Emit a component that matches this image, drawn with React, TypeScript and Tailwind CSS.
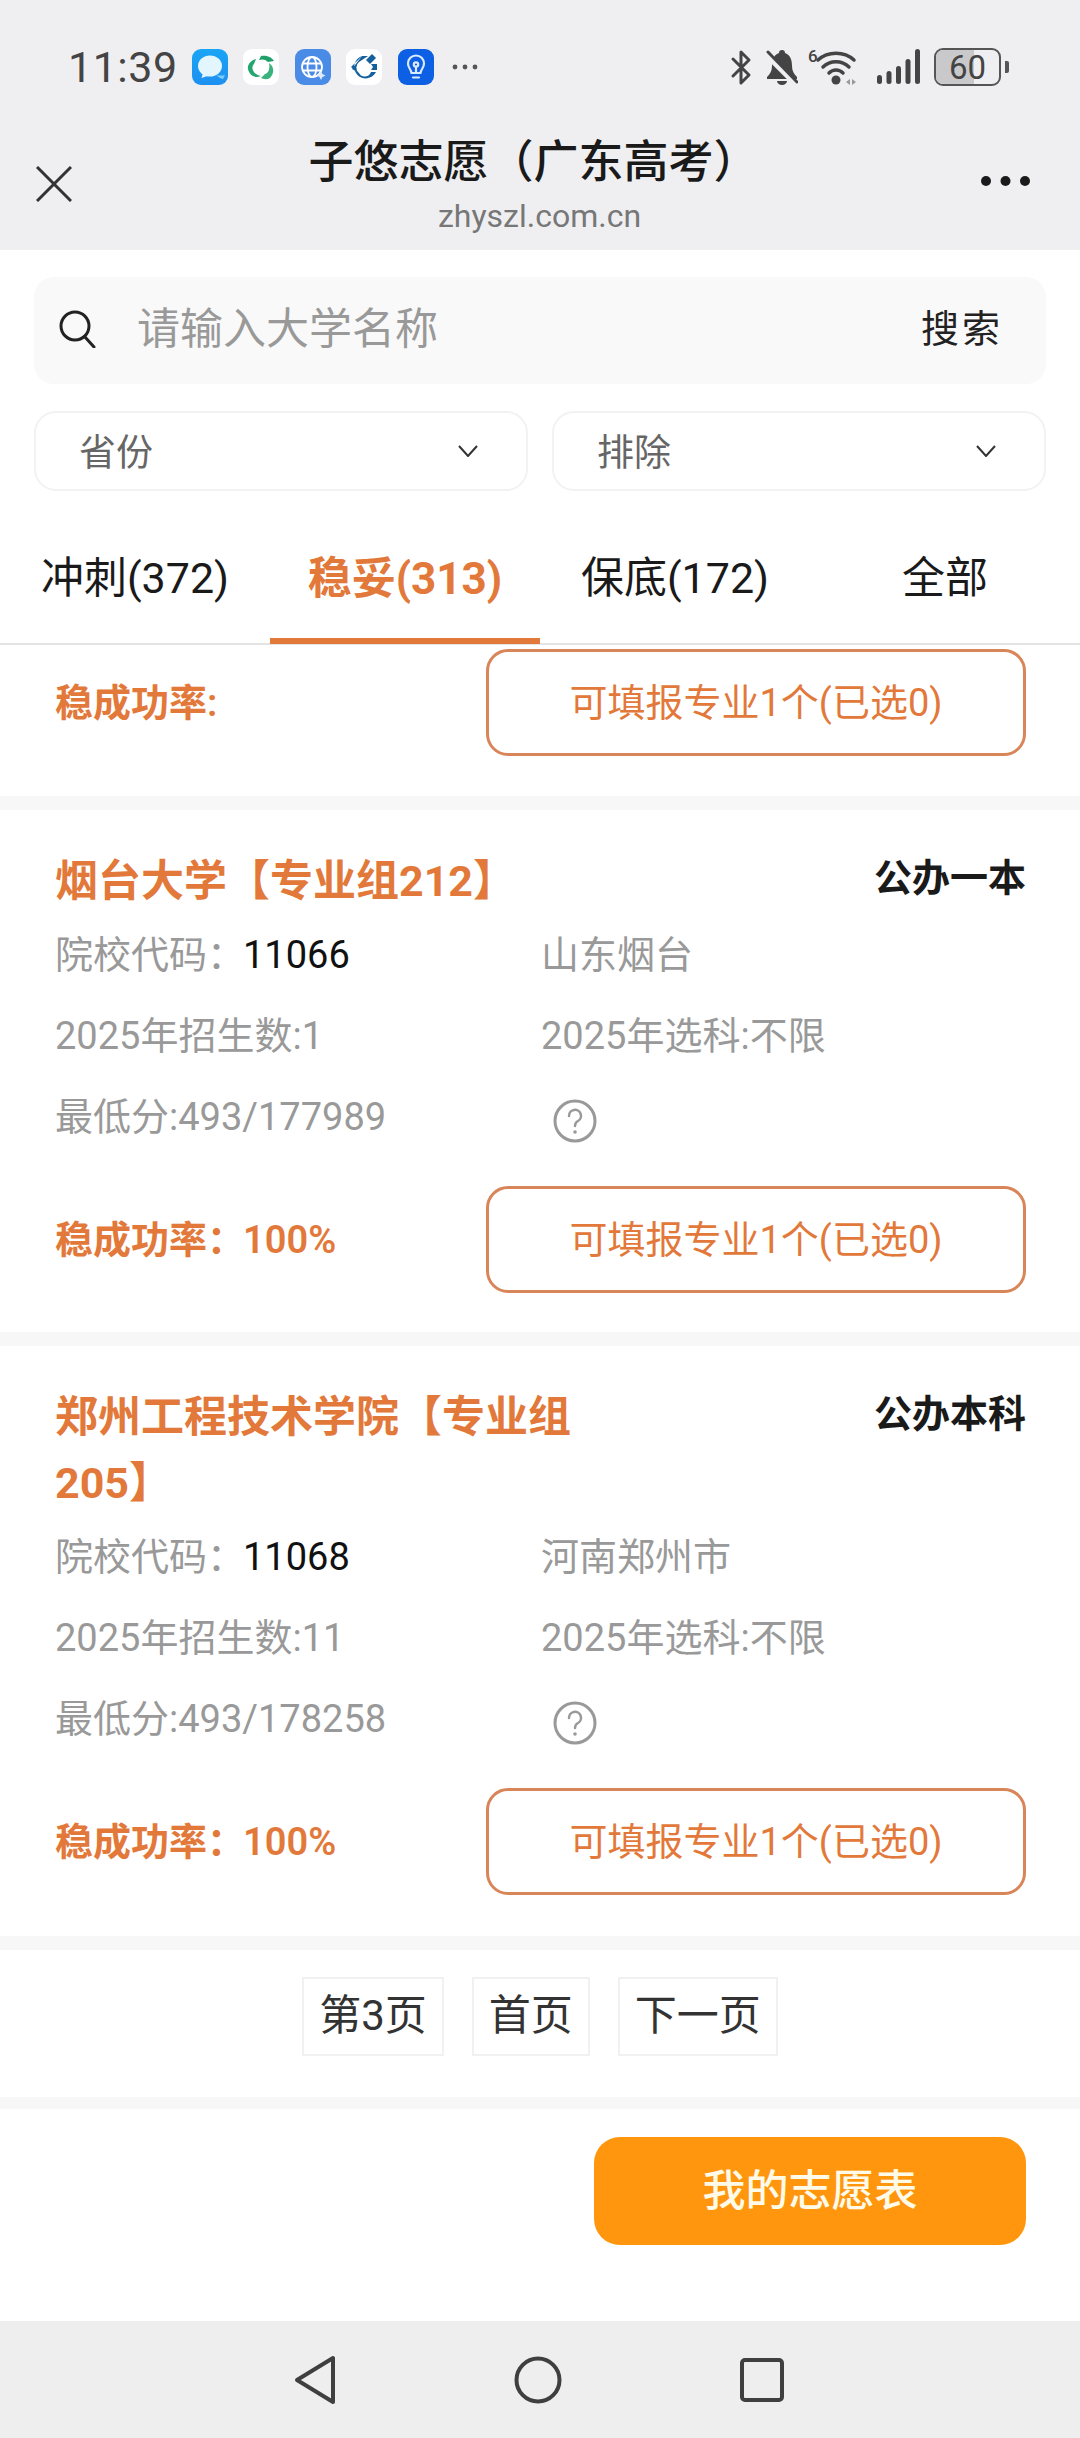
import React from "react";

const ORANGE = "text-[#e2793a]";

function AppIcons() {
  return (
    <div className="flex items-center ml-[14px]">
      <svg width="36" height="36" viewBox="0 0 36 36" className="mr-[15px]">
        <defs>
          <linearGradient id="m" x1="0" y1="0" x2="0" y2="1">
            <stop offset="0" stopColor="#19a5f5" />
            <stop offset="1" stopColor="#1e90f0" />
          </linearGradient>
        </defs>
        <rect width="36" height="36" rx="9" fill="url(#m)" />
        <ellipse cx="18" cy="17" rx="12" ry="10.5" fill="#e3f5fd" />
        <path d="M11 24 L9.5 29 L17 26.5 Z" fill="#e3f5fd" />
        <path d="M24 26 Q29 27 33 26 L31 30 Q27 29 24 26Z" fill="#7fcdf7" />
      </svg>
      <svg width="36" height="36" viewBox="0 0 36 36" className="mr-[16px]">
        <rect width="36" height="36" rx="9" fill="#ffffff" />
        <path d="M18 7 C25 6 29 9 31 12 L25 13 C22 10 19 10 16 11 Z" fill="#1fa06b" />
        <path d="M26 14 C32 18 31 25 27 29 C24 31 20 30 18 29 L22 25 C26 24 27 19 26 14Z" fill="#39b27c" />
        <path d="M18 27 C11 30 6 25 5 20 C4 16 8 11 13 10 L11 15 C7 19 11 26 18 27Z" fill="#25a56f" />
      </svg>
      <svg width="36" height="36" viewBox="0 0 36 36" className="mr-[15px]">
        <rect width="36" height="36" rx="9" fill="#4a8be6" />
        <g fill="none" stroke="#ffffff" strokeWidth="1.8">
          <circle cx="17" cy="18" r="10" />
          <ellipse cx="17" cy="18" rx="4.5" ry="10" />
          <path d="M7.5 14.5h19M7.5 21.5h19" />
        </g>
        <path d="M26 22l1.5 3 3 1.5-3 1.5-1.5 3-1.5-3-3-1.5 3-1.5z" fill="#dbe9fb" />
      </svg>
      <svg width="36" height="36" viewBox="0 0 36 36" className="mr-[16px]">
        <rect width="36" height="36" rx="9" fill="#ffffff" />
        <path d="M16 7 A11.500 11.500 0 1 0 30 23 L25 23 A6.500 6.500 0 0 1 13 24 L5 18 Z" fill="#14609c" />
        <path d="M16 7 L22 7 L13 13 A7 7 0 0 0 13 24 L6 20 Z" fill="#14609c" />
        <path d="M18 12 L24 18 L18 24 L12 18 Z" fill="#ffffff" />
        <path d="M20 11 L26 5 L30 9 L24 15 Z" fill="#14609c" />
        <path d="M25 15 L31 15 L31 21 L25 21 L27 18 Z" fill="#14609c" />
      </svg>
      <svg width="36" height="36" viewBox="0 0 36 36" className="mr-[18px]">
        <rect width="36" height="36" rx="9" fill="#0d5fe3" />
        <g fill="none" stroke="#dbe9ff" strokeWidth="2.2" strokeLinecap="round" strokeLinejoin="round">
          <path d="M13.5 24 C13 20 10 19 10 14.5 A8 8 0 0 1 26 14.5 C26 19 23 20 22.5 24 Z" />
          <path d="M15 28.5h6" />
          <path d="M18 24v-6" />
          <circle cx="18" cy="15.5" r="2.2" />
        </g>
      </svg>
      <svg width="26" height="6" viewBox="0 0 26 6">
        <circle cx="3" cy="3" r="2.4" fill="#555" />
        <circle cx="13" cy="3" r="2.4" fill="#555" />
        <circle cx="23" cy="3" r="2.4" fill="#555" />
      </svg>
    </div>
  );
}

function StatusRight() {
  return (
    <div className="flex items-center ml-auto">
      <svg width="24" height="37" viewBox="0 0 24 37" fill="none" stroke="#444" strokeWidth="3" strokeLinejoin="round" strokeLinecap="round" className="mr-[12px]">
        <path d="M3 10 L19 26 L11 34 L11 3 L19 11 L3 27" />
      </svg>
      <svg width="32" height="36" viewBox="0 0 32 36" className="mr-[10px]">
        <path d="M16 1a3 3 0 0 1 3 3 C25 6 26 12 26 17 C26 22 28 25 31 28 L31 30 L1 30 L1 28 C4 25 6 22 6 17 C6 12 7 6 13 4 a3 3 0 0 1 3-3Z" fill="#444" />
        <path d="M11 32 a5 4 0 0 0 10 0Z" fill="#444" />
        <path d="M1 6 L30 35" stroke="#efeff1" strokeWidth="6" />
        <path d="M2 3 L31 33" stroke="#444" strokeWidth="3" strokeLinecap="round" />
      </svg>
      <div className="relative w-[50px] h-[37px] mr-[19px]">
        <span className="absolute left-0 top-[-3px] text-[17px] leading-[20px] font-medium text-[#444]">6</span>
        <svg width="50" height="37" viewBox="0 0 50 37" fill="none" stroke="#444" strokeLinecap="round" className="absolute left-0 top-0">
          <path d="M10 11 C20 2 36 2 46 11" strokeWidth="3.5" />
          <path d="M15 18 C22 11 34 11 41 18" strokeWidth="3.5" />
          <path d="M21 24 C25 20 31 20 35 24" strokeWidth="3.5" />
          <circle cx="28" cy="31" r="4.5" fill="#444" stroke="none" />
          <path d="M38 33 l4-3 v6z M48 33 l-4-3 v6z" fill="#999" stroke="none" />
        </svg>
      </div>
      <svg width="43" height="36" viewBox="0 0 43 36" fill="#444" className="mr-[14px]">
        <rect x="0" y="26" width="5" height="9" rx="2.5" />
        <rect x="9.5" y="22" width="5" height="13" rx="2.5" />
        <rect x="19" y="17" width="5" height="18" rx="2.5" />
        <rect x="28.500" y="10" width="5" height="25" rx="2.5" />
        <rect x="38" y="0" width="5" height="35" rx="2.5" />
      </svg>
      <div className="relative w-[67px] h-[38px] rounded-[9px] border-[2.5px] border-[#555] overflow-hidden flex items-center justify-center">
        <div className="absolute left-0 top-0 bottom-0 w-[60%] bg-[#c9c9cb]" />
        <span className="relative text-[33px] leading-none text-[#444]">60</span>
      </div>
      <div className="w-[4px] h-[12px] rounded-r-[2px] bg-[#555] ml-[4px]" />
    </div>
  );
}

function Header() {
  return (
    <div className="h-[250px] bg-[#efeff1] shrink-0">
      <div className="flex items-center h-[38px] mt-[48px] pl-[68px] pr-[71px]">
        <span className="text-[43px] leading-none text-[#444] font-normal tracking-[0.5px]">11:39</span>
        <AppIcons />
        <StatusRight />
      </div>
      <div className="flex items-start mt-[55px] pl-[36px] pr-[50px]">
        <svg width="36" height="36" viewBox="0 0 36 36" fill="none" stroke="#333" strokeWidth="3" className="mt-[25px] shrink-0">
          <path d="M1 1 L35 35 M35 1 L1 35" />
        </svg>
        <div className="flex-1 flex flex-col items-center ml-[8px]">
          <div className="text-[45px] leading-[44px] text-[#1a1a1a] font-medium whitespace-nowrap ml-[6px]">子悠志愿（广东高考）</div>
          <div className="text-[32px] leading-[36px] text-[#777] mt-[13px] ml-[18px]">zhyszl.com.cn</div>
        </div>
        <svg width="49" height="10" viewBox="0 0 49 10" className="mt-[35px] shrink-0" fill="#1a1a1a">
          <circle cx="5" cy="5" r="5" />
          <circle cx="24.500" cy="5" r="5" />
          <circle cx="44" cy="5" r="5" />
        </svg>
      </div>
    </div>
  );
}

function Search() {
  return (
    <div className="mt-[27px] mx-[34px] h-[107px] rounded-[20px] bg-[#f9f9f9] flex items-center pl-[24px] pr-[43px] pb-[3px]">
      <svg width="38" height="38" viewBox="0 0 38 38" fill="none" stroke="#222" strokeWidth="3" strokeLinecap="round">
        <circle cx="17" cy="16" r="14" />
        <path d="M27 27 L36 37" />
      </svg>
      <span className="ml-[41px] text-[43px] leading-none text-[#999]">请输入大学名称</span>
      <span className="ml-auto text-[38px] leading-none text-[#222] tracking-[3px]">搜索</span>
    </div>
  );
}

function Select({ label }: { label: string }) {
  return (
    <div className="flex-1 h-[80px] rounded-[22px] border-2 border-[#f2f2f4] bg-white flex items-center pl-[43px] pr-[48px]">
      <span className="text-[37px] leading-none text-[#666] pt-[5px]">{label}</span>
      <svg width="20" height="12" viewBox="0 0 20 12" fill="none" stroke="#333" strokeWidth="2" className="ml-auto">
        <path d="M1 1 L10 11 L19 1" />
      </svg>
    </div>
  );
}

function Tabs() {
  const tabs = ["冲刺(372)", "稳妥(313)", "保底(172)", "全部"];
  return (
    <div className="grid grid-cols-4 h-[154px] border-b-2 border-[#e4e4e6]">
      {tabs.map((t, i) =>
        i === 1 ? (
          <div key={t} className="flex items-center justify-center pt-[28px] h-[153px] border-b-[6px] border-[#e2793a] text-[44px] font-bold text-[#e2793a]">
            {t}
          </div>
        ) : (
          <div key={t} className="flex items-center justify-center pt-[22px] text-[43px] text-[#1a1a1a]">
            {t}
          </div>
        ),
      )}
    </div>
  );
}

function ActionRow({ rate, className }: { rate?: string; className?: string }) {
  return (
    <div className={`flex items-center justify-between pl-[55px] pr-[54px] ${className ?? ""}`}>
      <div className={`text-[38px] leading-none font-semibold ${ORANGE}`}>
        {rate ? <>稳成功率：<span className="ml-[-2px]">{rate}</span></> : "稳成功率:"}
      </div>
      <div className="w-[540px] h-[107px] rounded-[22px] border-[3px] border-[#d9855a] flex items-center justify-center text-[38px] leading-none text-[#e2793a]">
        可填报专业1个(已选0)
      </div>
    </div>
  );
}

function Help() {
  return (
    <svg width="44" height="44" viewBox="0 0 44 44" fill="none" className="ml-[12px] mt-[6px]">
      <circle cx="22" cy="22" r="20" stroke="#999" strokeWidth="3" />
      <path d="M16 17 a6 6 0 1 1 9 5 c-2 1-3 2-3 5" stroke="#999" strokeWidth="2.5" strokeLinecap="round" />
      <circle cx="22" cy="33" r="1.8" fill="#999" />
    </svg>
  );
}

function Card(props: { title: React.ReactNode; kind: string; code: string; place: string; count: string; score: string; pb: string }) {
  return (
    <div className={`pt-[38px] bg-white ${props.pb}`}>
      <div className="flex items-start justify-between pl-[55px] pr-[54px]">
        <div className="w-[530px] text-[43px] leading-[66px] font-bold text-[#e2793a]">{props.title}</div>
        <div className="text-[38px] leading-[60px] font-bold text-[#1a1a1a] whitespace-nowrap">{props.kind}</div>
      </div>
      <div className="grid grid-cols-[486px_1fr] pl-[55px] pt-[1px] text-[38px] leading-[81px] text-[#999]">
        <div>院校代码：<span className="text-[#111] ml-[-2px]">{props.code}</span></div>
        <div>{props.place}</div>
        <div>2025年招生数:{props.count}</div>
        <div>2025年选科:不限</div>
        <div>最低分:{props.score}</div>
        <div className="flex items-center"><Help /></div>
      </div>
      <ActionRow rate="100%" className="mt-[28px]" />
    </div>
  );
}

function Band({ h }: { h: string }) {
  return <div className={`bg-[#f7f7f7] shrink-0 ${h}`} />;
}

function Pager() {
  const cls = "h-[79px] px-[15px] border-2 border-[#f1f1f1] flex items-center text-[42px] leading-none text-[#333] whitespace-nowrap pb-[2px]";
  return (
    <div className="h-[147px] pt-[27px] flex justify-center gap-[28px] items-start">
      <div className={cls}>第3页</div>
      <div className={cls}>首页</div>
      <div className={cls}>下一页</div>
    </div>
  );
}

function NavBar() {
  return (
    <div className="h-[117px] bg-[#eeeeee] shrink-0 flex items-center justify-center gap-[178px] pr-[2px]">
      <svg width="42" height="50" viewBox="0 0 42 50" fill="none" stroke="#3f3f3f" strokeWidth="4" strokeLinejoin="round">
        <path d="M39 3 L39 47 L3 25 Z" />
      </svg>
      <svg width="48" height="48" viewBox="0 0 48 48" fill="none" stroke="#3f3f3f" strokeWidth="4">
        <circle cx="24" cy="24" r="21.500" />
      </svg>
      <svg width="44" height="44" viewBox="0 0 44 44" fill="none" stroke="#3f3f3f" strokeWidth="4" strokeLinejoin="round">
        <rect x="2" y="2" width="40" height="40" rx="3" />
      </svg>
    </div>
  );
}

export default function App() {
  return (
    <div className="w-[1080px] h-[2438px] bg-white overflow-hidden flex flex-col font-['Roboto','Noto_Sans_CJK_SC',sans-serif]">
      <Header />
      <Search />
      <div className="flex gap-[24px] mx-[34px] mt-[27px]">
        <Select label="省份" />
        <Select label="排除" />
      </div>
      <Tabs />
      <div className="h-[151px] pt-[4px]">
        <ActionRow />
      </div>
      <Band h="h-[14px]" />
      <Card
        title="烟台大学【专业组212】"
        kind="公办一本"
        code="11066"
        place="山东烟台"
        count="1"
        score="493/177989"
        pb="pb-[39px]"
      />
      <Band h="h-[14px]" />
      <Card
        title="郑州工程技术学院【专业组205】"
        kind="公办本科"
        code="11068"
        place="河南郑州市"
        count="11"
        score="493/178258"
        pb="pb-[41px]"
      />
      <Band h="h-[14px]" />
      <Pager />
      <Band h="h-[12px]" />
      <div className="flex-1 flex justify-end items-start pt-[28px] pr-[54px]">
        <div className="w-[432px] h-[108px] rounded-[26px] bg-[#ff960e] flex items-center justify-center text-[43px] leading-none text-[#fffbe8] font-medium">
          我的志愿表
        </div>
      </div>
      <NavBar />
    </div>
  );
}
